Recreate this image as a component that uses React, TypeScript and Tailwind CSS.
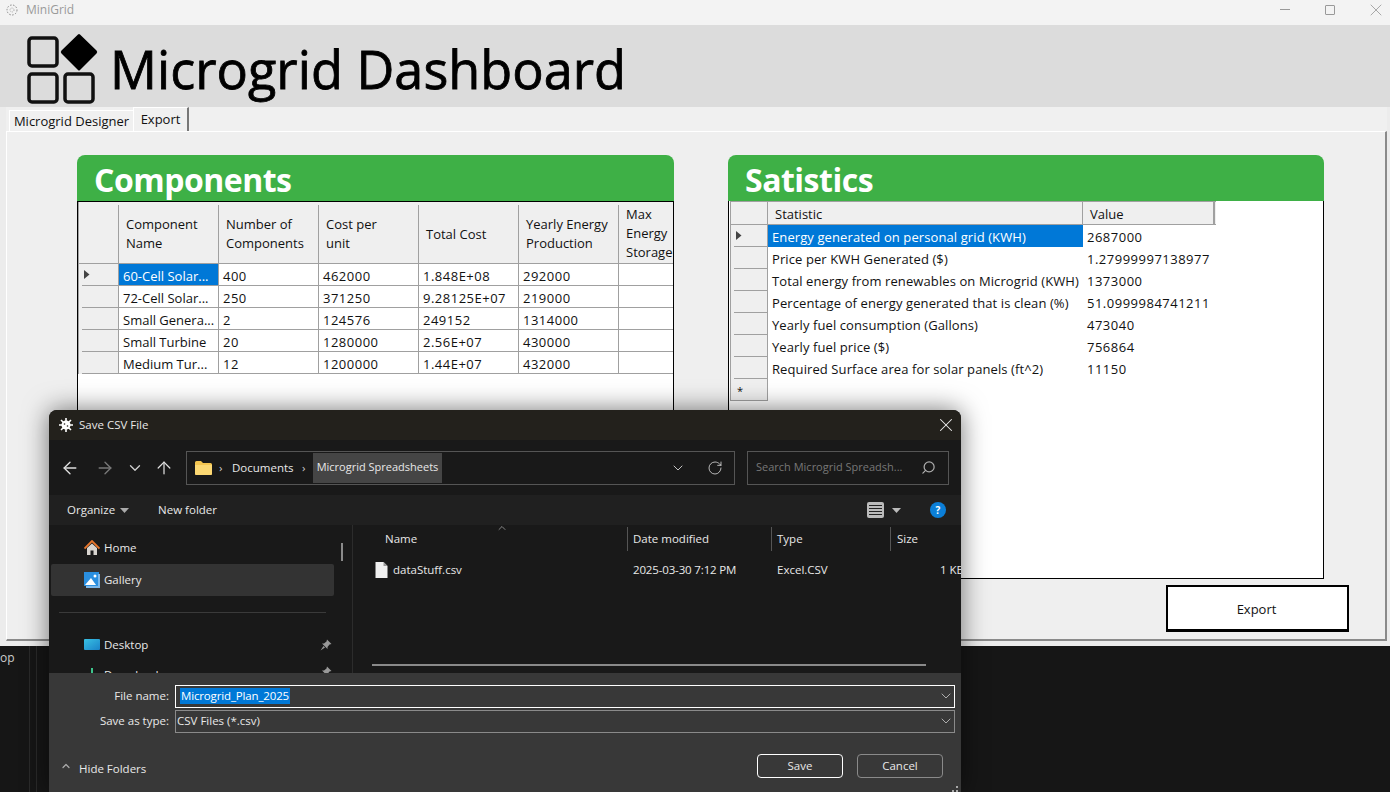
import { ArrowLeft, ArrowRight, ArrowUp, ChevronDown, ChevronUp, RotateCw, Search, X } from 'lucide-react';

const componentHeaders = ['Component\nName', 'Number of\nComponents', 'Cost per\nunit', 'Total Cost', 'Yearly Energy\nProduction'];

const componentRows = [
  ['60-Cell Solar...', '400', '462000', '1.848E+08', '292000'],
  ['72-Cell Solar...', '250', '371250', '9.28125E+07', '219000'],
  ['Small Genera...', '2', '124576', '249152', '1314000'],
  ['Small Turbine', '20', '1280000', '2.56E+07', '430000'],
  ['Medium Tur...', '12', '1200000', '1.44E+07', '432000'],
];

const statRows = [
  ['Energy generated on personal grid (KWH)', '2687000'],
  ['Price per KWH Generated ($)', '1.27999997138977'],
  ['Total energy from renewables on Microgrid (KWH)', '1373000'],
  ['Percentage of energy generated that is clean (%)', '51.0999984741211'],
  ['Yearly fuel consumption (Gallons)', '473040'],
  ['Yearly fuel price ($)', '756864'],
  ['Required Surface area for solar panels (ft^2)', '11150'],
];

function RowArrow() {
  return (
    <svg width="6" height="9" viewBox="0 0 6 9" className="ml-[2px]">
      <path d="M0 0L5.500 4.500L0 9Z" fill="#444" />
    </svg>
  );
}

function PinIcon() {
  return (
    <svg width="12" height="12" viewBox="0 0 12 12" className="ml-auto mr-[2px]">
      <path d="M7 0.500L11.500 5L9.500 5.500L7.500 8L7.500 10L2 4.500L4 4.500L6.500 2.500Z M3.500 7L0.500 11.500L5 8.500Z" fill="#999" />
    </svg>
  );
}

function AppLogo() {
  return (
    <svg width="72" height="72" viewBox="0 0 72 72" fill="none" className="mt-[6px] shrink-0">
      <rect x="2" y="5" width="28" height="28" rx="3" stroke="#111" strokeWidth="3.500" />
      <rect x="2" y="41" width="28" height="28" rx="3" stroke="#111" strokeWidth="3.500" />
      <rect x="38" y="41" width="28" height="28" rx="3" stroke="#111" strokeWidth="3.500" />
      <path d="M51 1.500Q52 0.500 53 1.500L69.500 17.500Q71 19 69.500 20.500L53 37Q52 38 51 37L34.500 20.500Q33 19 34.500 17.500Z" fill="#000" />
    </svg>
  );
}

function ComponentsTable() {
  return (
    <div className="h-[378px] overflow-hidden border border-black bg-white">
      <div className="flex h-[62px] w-[700px] border-b border-l border-[#a0a0a0] bg-[#efefef] text-[13px] leading-[19px] text-[#111]">
        <div className="w-[40px] shrink-0 pt-[3px]"><div className="h-full border-r border-[#a0a0a0]" /></div>
        {componentHeaders.map((label) => (
          <div key={label} className="w-[100px] shrink-0 pt-[3px]">
            <div className="flex h-full items-center whitespace-pre-line border-r border-[#a0a0a0] pl-[7px]">{label}</div>
          </div>
        ))}
        <div className="w-[60px] shrink-0 whitespace-pre-line pl-[7px] pt-[3px]">{'Max\nEnergy\nStorage'}</div>
      </div>
      {componentRows.map((row, i) => (
        <div key={row[0]} className="flex h-[22px] w-[700px] text-[13px] leading-[24px] text-[#111]">
          <div className="w-[40px] shrink-0 border-l border-[#a0a0a0] bg-[#efefef] pl-[3px]">
            <div className="flex h-full items-center border-b border-[#a0a0a0]">{i === 0 && <RowArrow />}</div>
          </div>
          {row.map((cell, c) => (
            <div
              key={c}
              className={
                i === 0 && c === 0
                  ? 'w-[100px] shrink-0 border-b border-l border-[#a0a0a0] bg-[#0078d7] pl-[4px] text-white'
                  : c === 0
                    ? 'w-[100px] shrink-0 border-b border-l border-[#a0a0a0] pl-[4px]'
                    : 'w-[100px] shrink-0 border-b border-l border-[#a0a0a0] pl-[4px] tracking-[0.5px]'
              }
            >
              {cell}
            </div>
          ))}
          <div className="w-[100px] shrink-0 border-x border-b border-[#a0a0a0]" />
        </div>
      ))}
    </div>
  );
}

function StatsTable() {
  return (
    <div className="h-[378px] border border-t-0 border-black bg-white text-[13px] text-[#111]">
      <div className="ml-[1px] flex h-[24px] w-[486px] border-y border-[#a0a0a0] bg-[#efefef] leading-[24px]">
        <div className="w-[38px] shrink-0 border-x border-[#a0a0a0]" />
        <div className="w-[315px] shrink-0 border-r border-[#a0a0a0] pl-[7px]">Statistic</div>
        <div className="w-[132px] shrink-0 border-r-2 border-[#a0a0a0] pl-[7px]">Value</div>
      </div>
      {statRows.map((row, i) => (
        <div key={row[0]} className="ml-[1px] flex h-[22px] leading-[24px]">
          <div className="w-[38px] shrink-0 border-x border-[#a0a0a0] bg-[#efefef] pl-[3px]">
            <div className="flex h-full items-center border-b border-[#a0a0a0]">{i === 0 && <RowArrow />}</div>
          </div>
          <div className={i === 0 ? 'w-[315px] shrink-0 bg-[#0078d7] pl-[4px] tracking-[0.1px] text-white' : 'w-[315px] shrink-0 whitespace-nowrap pl-[4px] tracking-[0.1px]'}>{row[0]}</div>
          <div className="pl-[4px] tracking-[0.5px]">{row[1]}</div>
        </div>
      ))}
      <div className="ml-[1px] h-[22px] w-[38px] border border-t-0 border-[#a0a0a0] bg-[#efefef] pl-[6px] text-[11px] leading-[24px]">*</div>
    </div>
  );
}

function PanelHeading({ title }: { title: string }) {
  return (
    <div className="flex h-[46px] items-center rounded-t-[8px] bg-[#3eb046] pl-[17px] pt-[3px] text-[32px] font-bold leading-none tracking-[-0.5px] text-white">
      {title}
    </div>
  );
}

function SaveDialog() {
  return (
    <div className="absolute left-[49px] top-[410px] flex h-[382px] w-[912px] flex-col overflow-hidden rounded-t-[8px] bg-[#191919] text-[11.500px] text-[#e8e8e8] shadow-[0_0_26px_rgba(0,0,0,0.55)]">
      <div className="flex h-[30px] shrink-0 items-center bg-[#23211c] pl-[10px] pr-[4px]">
        <svg width="14" height="14" viewBox="0 0 14 14" className="mr-[6px]">
          <circle cx="7" cy="7" r="4.500" fill="#fff" />
          <path d="M7 0V14M0 7H14M2 2L12 12M12 2L2 12" stroke="#fff" strokeWidth="1.600" />
          <circle cx="5.500" cy="6" r="0.800" fill="#23211c" />
          <circle cx="8.500" cy="8" r="0.800" fill="#23211c" />
        </svg>
        <span>Save CSV File</span>
        <X size={22} strokeWidth={1.100} className="ml-auto text-[#eee]" />
      </div>

      <div className="flex h-[55px] shrink-0 items-center pl-[11px]">
        <ArrowLeft size={20} strokeWidth={1.600} className="text-[#ddd]" />
        <ArrowRight size={20} strokeWidth={1.600} className="ml-[15px] text-[#777]" />
        <ChevronDown size={18} strokeWidth={1.800} className="ml-[11px] text-[#ccc]" />
        <ArrowUp size={20} strokeWidth={1.500} className="ml-[10px] text-[#ddd]" />
        <div className="ml-[12px] flex h-[34px] w-[549px] items-center border border-[#555] pl-[8px]">
          <svg width="17" height="14" viewBox="0 0 17 14" className="shrink-0">
            <path d="M0 1.500Q0 0 1.500 0H6L8 2H15.500Q17 2 17 3.500V12.500Q17 14 15.500 14H1.500Q0 14 0 12.500Z" fill="#f4c550" />
            <path d="M0 4H17V12.500Q17 14 15.500 14H1.500Q0 14 0 12.500Z" fill="#fcd873" />
          </svg>
          <span className="ml-[7px] w-[4px] text-[#ccc]">›</span>
          <span className="ml-[9px] w-[61px]">Documents</span>
          <span className="ml-[9px] w-[4px] text-[#ccc]">›</span>
          <div className="ml-[7px] flex h-[30px] w-[129px] shrink-0 items-center justify-center whitespace-nowrap bg-[#454545] text-[11px]">Microgrid Spreadsheets</div>
          <ChevronDown size={16} strokeWidth={1.300} className="ml-[228px] shrink-0 text-[#ddd]" />
          <RotateCw size={16} strokeWidth={1.200} className="ml-[21px] shrink-0 text-[#ddd]" />
        </div>
        <div className="ml-[12px] flex h-[34px] w-[202px] items-center border border-[#555] pl-[8px] text-[#777]">
          <span className="w-[165px] shrink-0 whitespace-nowrap text-[11px]">Search Microgrid Spreadsh...</span>
          <Search size={15} strokeWidth={2} className="-scale-x-100 text-[#aaa]" />
        </div>
      </div>

      <div className="flex h-[30px] shrink-0 items-center bg-[#202020] pl-[18px]">
        <span>Organize</span>
        <svg width="9" height="5" viewBox="0 0 9 5" className="ml-[5px]"><path d="M0 0H9L4.500 5Z" fill="#aaa" /></svg>
        <span className="ml-[29px]">New folder</span>
        <svg width="17" height="16" viewBox="0 0 17 16" className="ml-[650px]">
          <rect width="17" height="16" rx="2" fill="#bbb" />
          <path d="M2 3.500H15M2 6.500H15M2 9.500H15M2 12.500H15" stroke="#222" strokeWidth="1" />
        </svg>
        <svg width="9" height="5" viewBox="0 0 9 5" className="ml-[8px]"><path d="M0 0H9L4.500 5Z" fill="#bbb" /></svg>
        <div className="ml-[29px] flex h-[16px] w-[16px] items-center justify-center rounded-full bg-[#0b7fd8] text-[10px] font-bold text-white">?</div>
      </div>

      <div className="flex min-h-0 flex-1 overflow-hidden">
        <div className="w-[304px] shrink-0 border-r border-[#2c2c2c] pl-[2px]">
          <div className="flex h-[39px] items-center pl-[33px] pr-[9px] pt-[7px]">
            <svg width="16" height="16" viewBox="0 0 16 16">
              <path d="M3 8V15H6.500V10.500H9.500V15H13V8L8 3.500Z" fill="#d8d4cf" />
              <path d="M0.500 8.500L8 1L15.500 8.500" fill="none" stroke="#e8762c" strokeWidth="1.800" />
            </svg>
            <span className="ml-[4px]">Home</span>
            <div className="ml-auto mt-[8px] h-[18px] w-[2px] bg-[#8a8a8a]" />
          </div>
          <div className="flex h-[32px] w-[283px] items-center rounded-[2px] bg-[#333] pl-[33px]">
            <svg width="16" height="16" viewBox="0 0 16 16">
              <rect width="15" height="14" fill="#2a8fe0" />
              <path d="M14 2H16V16H2V14H14Z" fill="#7db8ea" />
              <path d="M1 13L7 6L12 13Z" fill="#fff" />
              <circle cx="11" cy="4" r="1.500" fill="#fff" />
            </svg>
            <span className="ml-[4px]">Gallery</span>
          </div>
          <div className="ml-[8px] mt-[16px] h-px w-[267px] bg-[#3a3a3a]" />
          <div className="mt-[16px] flex h-[32px] w-[283px] items-center pb-[1px] pl-[33px]">
            <svg width="16" height="12" viewBox="0 0 16 12">
              <defs>
                <linearGradient id="desk" x1="0" y1="0" x2="1" y2="1">
                  <stop offset="0" stopColor="#39c1e3" />
                  <stop offset="1" stopColor="#1a82c8" />
                </linearGradient>
              </defs>
              <rect width="16" height="11" rx="1" fill="url(#desk)" />
            </svg>
            <span className="ml-[4px]">Desktop</span>
            <PinIcon />
          </div>
          <div className="flex h-[29px] w-[283px] items-start whitespace-nowrap pl-[40px] pt-[5px]">
            <span className="mt-[2px] h-[16px] w-[2px] bg-[#3ec58c]" />
            <span className="ml-[11px]">Downloads</span>
            <PinIcon />
          </div>
        </div>

        <div className="flex min-w-0 flex-1 flex-col pl-[19px]">
          <div className="flex h-[28px] shrink-0 items-center whitespace-nowrap">
            <span className="relative w-[255px] shrink-0 pl-[13px]">
              Name
              <ChevronUp size={12} strokeWidth={1.500} className="absolute left-[124px] top-[-8px] text-[#aaa]" />
            </span>
            <span className="h-[24px] w-[144px] shrink-0 border-l border-[#555] pl-[5px] leading-[24px]">Date modified</span>
            <span className="h-[24px] w-[119px] shrink-0 border-l border-[#555] pl-[5px] leading-[24px]">Type</span>
            <span className="h-[24px] border-l border-[#555] pl-[6px] leading-[24px]">Size</span>
          </div>
          <div className="mt-[5px] flex h-[24px] shrink-0 items-center whitespace-nowrap">
            <svg width="13" height="16" viewBox="0 0 13 16" className="ml-[3px] shrink-0">
              <path d="M0.500 0H8.500L12.500 4V16H0.500Z" fill="#f0f0f0" />
              <path d="M8.500 0V4H12.500Z" fill="#999" />
            </svg>
            <span className="ml-[5px] w-[240px] shrink-0">dataStuff.csv</span>
            <span className="w-[144px] shrink-0 tracking-[-0.15px]">2025-03-30 7:12 PM</span>
            <span className="w-[163px] shrink-0">Excel.CSV</span>
            <span>1 KB</span>
          </div>
          <div className="mb-[7px] mt-auto h-[2px] w-[554px] bg-[#8a8a8a]" />
        </div>
      </div>

      <div className="flex h-[119px] shrink-0 flex-col bg-[#383838] px-[6px] pt-[12px]">
        <div className="flex h-[22px] items-center">
          <span className="w-[114px] text-right">File name:</span>
          <div className="ml-[6px] flex h-[23px] flex-1 items-center border border-white pl-[4px]">
            <span className="bg-[#0078d7] px-[1px] leading-[16px] tracking-[-0.15px] text-white">Microgrid_Plan_2025</span>
            <ChevronDown size={16} strokeWidth={1.200} className="ml-auto text-[#ccc]" />
          </div>
        </div>
        <div className="mt-[3px] flex h-[22px] items-center">
          <span className="w-[114px] text-right">Save as type:</span>
          <div className="ml-[6px] flex h-[23px] flex-1 items-center border border-[#8a8a8a] pl-[1px]">
            <span>CSV Files (*.csv)</span>
            <ChevronDown size={16} strokeWidth={1.200} className="ml-auto text-[#ccc]" />
          </div>
        </div>
        <div className="mt-[21px] flex h-[25px] items-center">
          <ChevronUp size={12} strokeWidth={2.500} className="ml-[5px] text-[#aaa]" />
          <span className="ml-[7px] mt-[7px]">Hide Folders</span>
          <div className="ml-auto flex h-[24px] w-[86px] items-center justify-center rounded-[4px] border border-white">Save</div>
          <div className="ml-[14px] mr-[12px] flex h-[24px] w-[86px] items-center justify-center rounded-[4px] border border-[#8a8a8a]">Cancel</div>
        </div>
        <svg width="6" height="6" viewBox="0 0 6 6" className="ml-auto mr-[-3px] mt-[8px]">
          <path d="M4 0H6V2H4ZM4 4H6V6H4ZM0 4H2V6H0Z" fill="#aaa" />
        </svg>
      </div>
    </div>
  );
}

export default function App() {
  return (
    <div className="relative h-[792px] w-[1390px] overflow-hidden bg-[#161616] [font-family:'Open_Sans',sans-serif]">
      <div className="flex h-[646px] flex-col bg-[#ececec]">
        <div className="flex h-[25px] shrink-0 items-center bg-[#f3f3f3] pb-[6px] pl-[6px] text-[12px] text-[#9a9a9a]">
          <svg width="12" height="12" viewBox="0 0 12 12" fill="none">
            <circle cx="6" cy="6" r="5" stroke="#888" strokeDasharray="1.500 1.500" />
            <circle cx="6" cy="6" r="2" stroke="#aaa" strokeDasharray="1 1" />
          </svg>
          <span className="ml-[8px]">MiniGrid</span>
          <div className="ml-auto flex items-center pr-[4px] text-[#999]">
            <span className="h-px w-[10px] bg-[#999]" />
            <span className="ml-[35px] h-[10px] w-[10px] rounded-[1px] border border-[#999]" />
            <X size={20} strokeWidth={1} className="ml-[31px]" />
          </div>
        </div>

        <div className="flex h-[82px] shrink-0 items-center bg-[#dcdcdc] pl-[27px]">
          <AppLogo />
          <h1 className="ml-[11px] pt-[6px] text-[52.200px] leading-none tracking-[0.03px] text-black [-webkit-text-stroke:0.8px_black]">Microgrid Dashboard</h1>
        </div>

        <div className="ml-[6px] mr-[3px] flex h-[24px] shrink-0 items-end bg-[#f0f0f0] pl-[3px] text-[13px] text-[#111]">
          <div className="flex h-[21px] w-[124px] items-center justify-center whitespace-nowrap border-l border-t border-white pt-[2px]">Microgrid Designer</div>
          <div className="flex h-[24px] w-[56px] items-center justify-center border-l border-r-2 border-t border-white border-r-[#777]">Export</div>
        </div>

        <div className="ml-[6px] mr-[3px] flex h-[510px] shrink-0 flex-col border-b-2 border-l border-r-2 border-t border-white border-b-[#8a8a8a] border-r-[#8a8a8a] bg-[#efefef]">
          <div className="flex gap-[54px] pl-[70px] pt-[23px]">
            <section className="w-[597px]">
              <PanelHeading title="Components" />
              <ComponentsTable />
            </section>
            <section className="w-[596px]">
              <PanelHeading title="Satistics" />
              <StatsTable />
            </section>
          </div>
          <div className="mt-[6px] flex justify-end pr-[36px]">
            <button className="h-[47px] w-[183px] border-2 border-b-[3px] border-black bg-white pr-[2px] pt-[3px] text-[13px] text-[#111]">Export</button>
          </div>
        </div>
      </div>

      <div className="flex h-[146px] text-[12px] text-[#ccc]">
        <span className="w-[29px] pt-[3px]">op</span>
        <span className="w-[7px] border-l border-[#2a2a2a]" />
        <span className="border-l border-[#2a2a2a]" />
      </div>

      <SaveDialog />
    </div>
  );
}
